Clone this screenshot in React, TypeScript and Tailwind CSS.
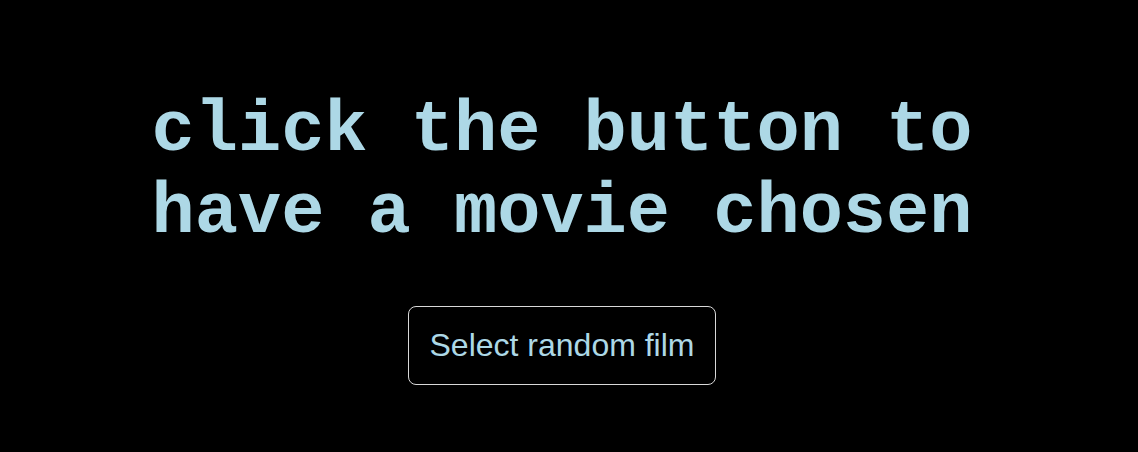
export default function App() {
  return (
    <div className="min-h-[452px] w-full bg-black pr-[14px] pt-[91px]">
      <div className="flex flex-col items-center">
        <h1 className="text-center font-['Liberation_Mono','Courier_New',monospace] text-[72px] font-bold leading-[1.133] text-[#add8e6]">
          click the button to
          <br />
          have a movie chosen
        </h1>
        <button className="mt-[52px] rounded-[8px] border border-[#d8d8d8] bg-black px-[21px] py-[20px] font-['Liberation_Sans',Arial,sans-serif] text-[32px] leading-[37px] text-[#add8e6]">
          Select random film
        </button>
      </div>
    </div>
  );
}
